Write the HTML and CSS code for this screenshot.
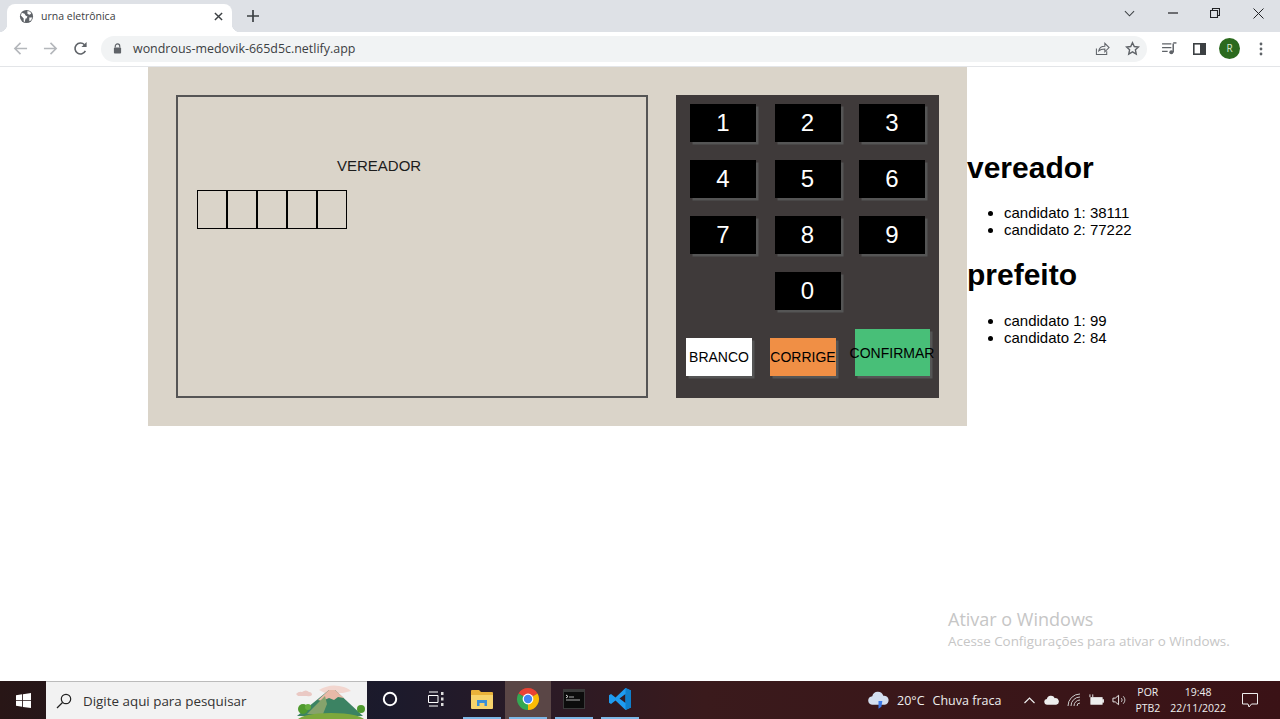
FILE: index.html
```html
<!DOCTYPE html>
<html lang="pt-BR">
<head>
    <meta charset="UTF-8">
    <title>urna eletrônica</title>
    <link rel="stylesheet" href="styles.css">
</head>
<body>
    <!-- navegador -->
    <header class="tabstrip">
        <div class="tab">
            <svg class="favicon" viewBox="0 0 16 16"><circle cx="8" cy="8" r="7" fill="#5f6368"/><path d="M3 4l3 1 1 2 2 1-1 2-1 0-1 4-1-1 0-3-2-2-1-1zM9 2l3 1 1 2-2 1-2-1zM11 9l3 0-1 3-2 1z" fill="#fff"/></svg>
            <span class="tab-title">urna eletrônica</span>
            <svg class="tab-close" viewBox="0 0 10 10"><path d="M1 1l8 8M9 1l-8 8" stroke="#3c4043" stroke-width="1.6"/></svg>
        </div>
        <svg class="new-tab" viewBox="0 0 12 12"><path d="M6 0v12M0 6h12" stroke="#3c4043" stroke-width="1.7"/></svg>
        <div class="window-controls">
            <svg class="win-chevron" viewBox="0 0 12 7"><path d="M1 1l5 5 5-5" fill="none" stroke="#3c4043" stroke-width="1.1"/></svg>
            <svg class="win-min" viewBox="0 0 10 2"><path d="M0 1h10" stroke="#202124" stroke-width="1.2"/></svg>
            <svg class="win-max" viewBox="0 0 10 10"><path d="M.5 2.5h7v7h-7zM2.5 2.5v-2h7v7h-2" fill="none" stroke="#202124" stroke-width="1.1"/></svg>
            <svg class="win-close" viewBox="0 0 11 11"><path d="M.5.5l10 10M10.5.5l-10 10" stroke="#202124" stroke-width="1"/></svg>
        </div>
    </header>
    <nav class="toolbar">
        <svg class="nav-icon" viewBox="0 0 16 16"><path d="M15 8H2M8 2L2 8l6 6" fill="none" stroke="#b4b7bb" stroke-width="1.7"/></svg>
        <svg class="nav-icon" viewBox="0 0 16 16"><path d="M1 8h13M8 2l6 6-6 6" fill="none" stroke="#b4b7bb" stroke-width="1.7"/></svg>
        <svg class="nav-icon" viewBox="0 0 16 16"><path d="M13.2 10.5A5.8 5.8 0 1 1 12.2 4" fill="none" stroke="#5f6368" stroke-width="1.7"/><path d="M14.5 1v5.5H9z" fill="#5f6368"/></svg>
        <div class="omnibox">
            <svg class="lock" viewBox="0 0 10 12"><path d="M2.5 5V3.4a2.5 2.5 0 0 1 5 0V5" fill="none" stroke="#5f6368" stroke-width="1.3"/><rect x="1" y="5" width="8" height="6.5" rx="1" fill="#5f6368"/></svg>
            <span class="url">wondrous-medovik-665d5c.netlify.app</span>
            <svg class="share" viewBox="0 0 16 16"><path d="M1.5 8v6.5h11V11M4 10.500c.5-3.500 3-5 6.500-5V2.500L15 7l-4.500 4.500V8.500C8 8.500 5.500 9 4 10.500z" fill="none" stroke="#5f6368" stroke-width="1.1"/></svg>
            <svg class="star" viewBox="0 0 16 16"><path d="M8 1.800l1.900 4.100 4.500.5-3.300 3 .9 4.500L8 11.600l-4 2.300.9-4.500-3.300-3 4.500-.5z" fill="none" stroke="#5f6368" stroke-width="1.5"/></svg>
        </div>
        <svg class="media" viewBox="0 0 16 14"><path d="M0 2h10M0 6h10M0 10h6" stroke="#5f6368" stroke-width="1.4"/><path d="M12 1.500V11" stroke="#5f6368" stroke-width="1.6"/><path d="M12 1h3.500" stroke="#5f6368" stroke-width="1.5"/><circle cx="10" cy="11" r="2.200" fill="#5f6368"/></svg>
        <svg class="panel" viewBox="0 0 13 12"><rect x=".8" y=".8" width="11.400" height="10.400" fill="none" stroke="#3c4043" stroke-width="1.6"/><rect x="7" y="1" width="5" height="10" fill="#3c4043"/></svg>
        <div class="avatar">R</div>
        <svg class="menu-dots" viewBox="0 0 4 14"><circle cx="2" cy="2" r="1.400" fill="#5f6368"/><circle cx="2" cy="7" r="1.400" fill="#5f6368"/><circle cx="2" cy="12" r="1.400" fill="#5f6368"/></svg>
    </nav>

    <!-- pagina -->
    <main class="page">
        <section class="urna">
            <div class="tela">
                <p class="cargo">VEREADOR</p>
                <div class="digitos">
                    <div class="digito"></div>
                    <div class="digito"></div>
                    <div class="digito"></div>
                    <div class="digito"></div>
                    <div class="digito"></div>
                </div>
            </div>
            <div class="teclado">
                <div class="linha">
                    <button class="tecla">1</button>
                    <button class="tecla">2</button>
                    <button class="tecla">3</button>
                </div>
                <div class="linha">
                    <button class="tecla">4</button>
                    <button class="tecla">5</button>
                    <button class="tecla">6</button>
                </div>
                <div class="linha">
                    <button class="tecla">7</button>
                    <button class="tecla">8</button>
                    <button class="tecla">9</button>
                </div>
                <div class="linha linha-zero">
                    <button class="tecla">0</button>
                </div>
                <div class="linha-acoes">
                    <button class="acao branco">BRANCO</button>
                    <button class="acao corrige">CORRIGE</button>
                    <button class="acao confirmar">CONFIRMAR</button>
                </div>
            </div>
        </section>
        <aside class="resultados">
            <h2>vereador</h2>
            <ul>
                <li>candidato 1: 38111</li>
                <li>candidato 2: 77222</li>
            </ul>
            <h2>prefeito</h2>
            <ul>
                <li>candidato 1: 99</li>
                <li>candidato 2: 84</li>
            </ul>
        </aside>
        <div class="ativar">
            <div class="ativar-titulo">Ativar o Windows</div>
            <div class="ativar-texto">Acesse Configurações para ativar o Windows.</div>
        </div>
    </main>

    <!-- barra de tarefas -->
    <footer class="taskbar">
        <div class="start">
            <svg class="win-logo" viewBox="0 0 16 16"><path d="M0 2.300l6.500-.9v6.200H0zM7.400 1.300L16 0v7.600H7.400zM0 8.400h6.500v6.200L0 13.700zM7.400 8.400H16V16l-8.600-1.200z" fill="#fff"/></svg>
        </div>
        <div class="search">
            <svg class="search-icon" viewBox="0 0 16 16"><circle cx="10" cy="6" r="4.700" fill="none" stroke="#222" stroke-width="1.200"/><path d="M6.500 9.500L1 15" stroke="#222" stroke-width="1.300"/></svg>
            <span class="search-text">Digite aqui para pesquisar</span>
            <svg class="mountain" viewBox="0 0 72 37">
                <path d="M1 12q3-3 6-2 4-3 7 0 3 0 3 3-2 2-5 1H3z" fill="#eac9c4"/>
                <path d="M24 8q10-6 20-4 8 1 12 5l-8 2H30z" fill="#f2d6cf"/>
                <path d="M2 34L34 8h6l28 26z" fill="#3c8363"/>
                <path d="M34 8h6l9 8-6-1-4 3-5-2-7 3-4-1z" fill="#e9b9a8"/>
                <path d="M30 14L12 32h16l4-10z" fill="#86a36c"/>
                <ellipse cx="36" cy="39" rx="34" ry="8" fill="#7da83c"/>
                <circle cx="8" cy="27" r="5" fill="#4f9a2e"/>
                <circle cx="13" cy="25" r="3" fill="#65ad3e"/>
                <circle cx="66" cy="27" r="4" fill="#4f9a2e"/>
            </svg>
        </div>
        <div class="apps">
            <div class="app">
                <svg class="cortana" viewBox="0 0 16 16"><circle cx="8" cy="8" r="6.200" fill="none" stroke="#fff" stroke-width="2"/></svg>
            </div>
            <div class="app">
                <svg class="taskview" viewBox="0 0 16 16"><path d="M.5 4.500h9.500v7H.5zM1 1h9M1 15h9" fill="none" stroke="#fff" stroke-width="1"/><path d="M13 1h2.500v3H13zM13 6.500h2.500v3H13zM13 12h2.500v3H13z" fill="#ddd"/></svg>
            </div>
            <div class="app app-open">
                <svg class="app-icon" viewBox="0 0 22 20"><path d="M0 2a1 1 0 0 1 1-1h7l2 2h11a1 1 0 0 1 1 1v3H0z" fill="#e8b23a"/><path d="M0 6h22v13a1 1 0 0 1-1 1H1a1 1 0 0 1-1-1z" fill="#f6d36b"/><path d="M6 11h10v6H6z" fill="#3b8fd6"/><path d="M8.500 14h5v3h-5z" fill="#f6d36b"/></svg>
            </div>
            <div class="app app-open app-active">
                <svg class="chrome" viewBox="0 0 24 24">
                    <path d="M12 12L2.470 6.500A11 11 0 0 1 21.530 6.500z" fill="#ea4335"/>
                    <path d="M12 12L21.530 6.500A11 11 0 0 1 12 23z" fill="#fbbc05"/>
                    <path d="M12 12L12 23A11 11 0 0 1 2.470 6.500z" fill="#34a853"/>
                    <circle cx="12" cy="12" r="5.400" fill="#fff"/>
                    <circle cx="12" cy="12" r="4.200" fill="#4285f4"/>
                </svg>
            </div>
            <div class="app app-open">
                <svg class="app-icon" viewBox="0 0 22 20"><rect width="22" height="20" fill="#3a3a3a"/><rect y="3" x="1" width="20" height="16" fill="#0c0c0c"/><path d="M3 6l2 1.500L3 9" fill="none" stroke="#ddd" stroke-width="1"/><path d="M6 8h5M3 11h14" stroke="#aaa" stroke-width="1"/></svg>
            </div>
            <div class="app app-open">
                <svg class="code-icon" viewBox="0 0 24 24"><path d="M17.500 1L23 3.500v17L17.500 23 7.500 13.500 3 17l-2-1.200V8.200L3 7l4.500 3.500zM17.500 7l-6 4.500 6 4.500z" fill="#1f9cf0"/><path d="M17.500 1L23 3.500v17L17.500 23z" fill="#0f7fcb"/></svg>
            </div>
        </div>
        <div class="tray">
            <div class="clima">
                <svg class="clima-icon" viewBox="0 0 24 20"><path d="M6 15a4.500 4.500 0 0 1-.5-9A6 6 0 0 1 17 5.500 4.800 4.800 0 0 1 18.500 15z" fill="#d3dff0"/><path d="M12 11h4l-1 6-3 2z" fill="#3b78e7"/></svg>
                <span class="clima-temp">20°C</span>
                <span class="clima-texto">Chuva fraca</span>
            </div>
            <div class="tray-icons">
                <svg class="tray-chevron" viewBox="0 0 12 7"><path d="M1 6l5-5 5 5" fill="none" stroke="#eee" stroke-width="1.200"/></svg>
                <svg class="tray-cloud" viewBox="0 0 16 10"><path d="M3.500 10a3 3 0 0 1-.5-6 4.500 4.500 0 0 1 8.500-1 3.500 3.500 0 0 1 1.500 7z" fill="#eee"/></svg>
                <svg class="tray-wifi" viewBox="0 0 14 14"><path d="M1 13A12 12 0 0 1 13 1M4 13a9 9 0 0 1 9-9M7 13a6 6 0 0 1 6-6M10 13a3 3 0 0 1 3-3" fill="none" stroke="#ccc" stroke-width="1"/></svg>
                <svg class="tray-battery" viewBox="0 0 16 12"><rect x="2" y="3.500" width="12" height="7" fill="#eee" stroke="#eee"/><path d="M14.500 5.500h1v3h-1zM1 0v3M4 0v3" stroke="#eee" fill="none"/></svg>
                <svg class="tray-volume" viewBox="0 0 16 14"><path d="M1 5h2.500L7 2v10L3.500 9H1z" fill="none" stroke="#eee"/><path d="M10 5a3 3 0 0 1 0 4M12 3a6 6 0 0 1 0 8" fill="none" stroke="#ccc"/></svg>
            </div>
            <div class="idioma"><span>POR</span><span>PTB2</span></div>
            <div class="relogio"><span>19:48</span><span>22/11/2022</span></div>
            <svg class="notificacao" viewBox="0 0 16 15"><path d="M.5.500h15v10.500h-6l-2.500 3-1-3H.5z" fill="none" stroke="#eee"/></svg>
        </div>
    </footer>
</body>
</html>
```

FILE: styles.css
```css
* {
    box-sizing: border-box;
}
body {
    margin: 0;
    height: 100vh;
    display: flex;
    flex-direction: column;
    overflow: hidden;
    background-color: white;
    color: black;
    font-family: 'Liberation Sans', Arial, sans-serif;
}
svg {
    display: block;
    flex-shrink: 0;
}

/* navegador */
.tabstrip {
    height: 32px;
    padding: 4px 0 0 7px;
    display: flex;
    background-color: #dee1e6;
}
.tab {
    position: relative;
    width: 225px;
    height: 28px;
    padding: 0 9px 4px 12px;
    display: flex;
    align-items: center;
    background-color: white;
    border-radius: 8px 8px 0 0;
    font-family: 'Open Sans', sans-serif;
}
.tab::before,
.tab::after {
    content: "";
    position: absolute;
    bottom: 0;
    width: 8px;
    height: 8px;
}
.tab::before {
    left: -8px;
    background: radial-gradient(circle at 0 0, transparent 8px, white 8.500px);
}
.tab::after {
    right: -8px;
    background: radial-gradient(circle at 100% 0, transparent 8px, white 8.500px);
}
.favicon {
    width: 15px;
    height: 15px;
}
.tab-title {
    margin-left: 7px;
    flex: 1;
    font-size: 10.500px;
    color: #3c4043;
}
.tab-close {
    width: 9px;
    height: 9px;
}
.new-tab {
    width: 12px;
    height: 12px;
    margin: 6px 0 0 15px;
}
.window-controls {
    margin-left: auto;
    display: flex;
    align-items: center;
    height: 18px;
    padding-right: 16px;
}
.win-chevron {
    width: 11px;
    height: 7px;
}
.win-min {
    width: 10px;
    height: 2px;
    margin-left: 33px;
}
.win-max {
    width: 10px;
    height: 10px;
    margin-left: 32px;
}
.win-close {
    width: 11px;
    height: 11px;
    margin-left: 33px;
}
.toolbar {
    height: 35px;
    padding: 0 0 1px 13px;
    display: flex;
    align-items: center;
    background-color: white;
    border-bottom: 1px solid #e3e5e8;
}
.nav-icon {
    width: 15px;
    height: 15px;
    margin-right: 15px;
}
.omnibox {
    flex-shrink: 0;
    width: 1046px;
    height: 26px;
    margin-left: -2px;
    padding: 0 7px 0 12px;
    display: flex;
    align-items: center;
    background-color: #f1f3f4;
    border-radius: 13px;
}
.lock {
    width: 9px;
    height: 11px;
}
.url {
    margin-left: 11px;
    flex: 1;
    font-family: 'Open Sans', sans-serif;
    font-size: 12.450px;
    color: #3c4043;
}
.share {
    width: 15px;
    height: 15px;
}
.star {
    width: 15px;
    height: 15px;
    margin-left: 15px;
}
.media {
    width: 15px;
    height: 13px;
    margin-left: 15px;
}
.panel {
    width: 13px;
    height: 12px;
    margin-left: 16px;
}
.avatar {
    flex-shrink: 0;
    width: 21px;
    height: 21px;
    margin-left: 13px;
    border-radius: 50%;
    background-color: #2b6a1e;
    color: #d8e8d2;
    font-family: 'Open Sans', sans-serif;
    font-size: 10px;
    line-height: 21px;
    text-align: center;
}
.menu-dots {
    width: 4px;
    height: 14px;
    margin-left: 19px;
}

/* pagina */
.page {
    position: relative;
    flex: 1;
    padding-left: 148px;
    display: flex;
    align-items: flex-start;
}
.urna {
    width: 819px;
    height: 359px;
    padding: 28px;
    display: flex;
    gap: 28px;
    background-color: #dad4c9;
}
.tela {
    width: 472px;
    height: 303px;
    padding: 60px 0 0 19px;
    border: 2px solid #555;
}
.cargo {
    margin: 0 0 15px 140px;
    font-size: 15px;
    line-height: 18px;
    color: #1c1c1c;
}
.digitos {
    display: flex;
}
.digito {
    width: 30px;
    height: 39px;
    border: 1px solid black;
}
.teclado {
    width: 263px;
    height: 303px;
    padding: 9px 0 0 14px;
    background-color: #3f3a3a;
}
.linha {
    display: flex;
    gap: 18.500px;
    margin-bottom: 18px;
}
.linha-zero {
    padding-left: 84.500px;
    margin-bottom: 0;
}
.tecla {
    width: 66px;
    height: 38px;
    padding: 0;
    border: 0;
    background-color: black;
    box-shadow: 2.500px 2.500px 0 #555;
    color: white;
    font-family: inherit;
    font-size: 24px;
}
.linha-acoes {
    height: 47px;
    margin: 19px 0 0 -4px;
    display: flex;
    align-items: flex-end;
}
.acao {
    width: 66px;
    height: 38px;
    padding: 0;
    border: 0;
    box-shadow: 2.500px 2.500px 0 #555;
    color: black;
    font-family: inherit;
    font-size: 14px;
    white-space: nowrap;
}
.branco {
    background-color: white;
}
.corrige {
    margin-left: 18px;
    background-color: #f08f45;
}
.confirmar {
    width: 75px;
    height: 47px;
    margin-left: 18.500px;
    display: flex;
    align-items: center;
    justify-content: center;
    background-color: #48bf78;
}
.resultados h2 {
    margin: 84px 0 0;
    font-size: 30px;
    line-height: 34px;
}
.resultados ul {
    margin: 19px 0 0;
    padding-left: 37px;
    font-size: 15px;
    line-height: 17px;
}
.resultados ul + h2 {
    margin-top: 20px;
}
.resultados ul + h2 + ul {
    margin-top: 20px;
}
.ativar {
    position: absolute;
    left: 948px;
    top: 540px;
    font-family: 'Open Sans', sans-serif;
    color: #c6c6c6;
}
.ativar-titulo {
    font-size: 18px;
    line-height: 24px;
}
.ativar-texto {
    font-size: 13.400px;
    line-height: 20px;
}

/* barra de tarefas */
.taskbar {
    height: 38px;
    display: flex;
    background: linear-gradient(90deg, #281616 0, #1b1a2c 30%, #2a1a26 42%, #3a1a1c 55%, #3a1216 100%);
    color: #eee;
    font-family: 'Open Sans', sans-serif;
}
.start {
    width: 46px;
    display: flex;
    align-items: center;
    justify-content: center;
}
.win-logo {
    width: 15px;
    height: 15px;
}
.search {
    position: relative;
    width: 321px;
    padding-left: 10px;
    display: flex;
    align-items: center;
    background-color: #f2f2f2;
    border-top: 1px solid #bbb;
    color: #333;
}
.search-icon {
    width: 16px;
    height: 16px;
}
.search-text {
    margin-left: 11px;
    font-size: 13.400px;
}
.mountain {
    width: 72px;
    height: 37px;
    margin-left: auto;
}
.apps {
    display: flex;
}
.app {
    width: 46px;
    display: flex;
    align-items: center;
    justify-content: center;
    padding-bottom: 2px;
}
.app-open {
    background: linear-gradient(#7db7e6, #7db7e6) center bottom / 38px 2px no-repeat;
}
.app-active {
    background: linear-gradient(#7db7e6, #7db7e6) center bottom / 38px 2px no-repeat, #5a4646;
}
.cortana {
    width: 16px;
    height: 16px;
}
.taskview {
    width: 16px;
    height: 16px;
}
.app-icon {
    width: 22px;
    height: 20px;
}
.chrome {
    width: 24px;
    height: 24px;
}
.code-icon {
    width: 24px;
    height: 24px;
}
.tray {
    flex: 1;
    padding-left: 224px;
    display: flex;
    align-items: center;
}
.clima {
    display: flex;
    align-items: center;
    font-size: 12.500px;
}
.clima-icon {
    width: 23px;
    height: 20px;
}
.clima-temp {
    margin-left: 7px;
}
.clima-texto {
    margin-left: 8px;
}
.tray-icons {
    margin-left: 22px;
    display: flex;
    align-items: center;
    gap: 8px;
}
.tray-chevron {
    width: 13px;
    height: 7px;
}
.tray-cloud {
    width: 15px;
    height: 10px;
}
.tray-wifi {
    width: 14px;
    height: 14px;
}
.tray-battery {
    width: 15px;
    height: 12px;
}
.tray-volume {
    width: 15px;
    height: 14px;
}
.idioma,
.relogio {
    display: flex;
    flex-direction: column;
    align-items: center;
    font-size: 10.500px;
    line-height: 16px;
}
.idioma {
    margin-left: 8px;
}
.relogio {
    margin-left: 10px;
}
.notificacao {
    width: 16px;
    height: 15px;
    margin-left: 16px;
}
```
